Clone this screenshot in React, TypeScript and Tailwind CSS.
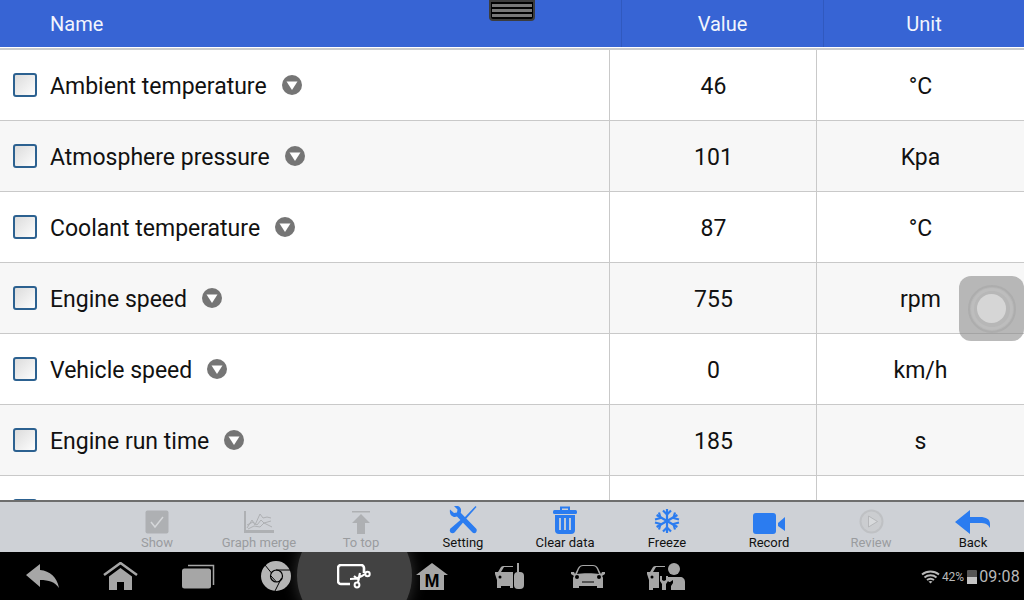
import type { ReactNode } from "react"

const rows = [
  { name: "Ambient temperature", value: "46", unit: "°C" },
  { name: "Atmosphere pressure", value: "101", unit: "Kpa" },
  { name: "Coolant temperature", value: "87", unit: "°C" },
  { name: "Engine speed", value: "755", unit: "rpm" },
  { name: "Vehicle speed", value: "0", unit: "km/h" },
  { name: "Engine run time", value: "185", unit: "s" },
  { name: "", value: "", unit: "" },
]

const BLUE = "#2b7cf0"
const OFF = "#aeb0b3"
const NAV = "#a6a6a6"

function ShowIcon() {
  return (
    <svg width="24" height="24" viewBox="0 0 24 24">
      <rect x="0.500" y="0.500" width="23" height="23" rx="2" fill={OFF} />
      <path d="M6 12l4 5 8-10" fill="none" stroke="#d5d7da" strokeWidth="1.500" />
    </svg>
  )
}

function GraphIcon() {
  return (
    <svg width="30" height="23" viewBox="0 0 30 23">
      <path d="M0 0h2v19h28v3H0z" fill={OFF} />
      <path d="M3 17l5-8 3 5 5-11 3 4 4-1 4 1M3 14l6-3 4 3 4-5 3 3 7-2M4 18l6-3 6 1 4-4 8 4" fill="none" stroke={OFF} strokeWidth="1" />
    </svg>
  )
}

function ToTopIcon() {
  return (
    <svg width="20" height="23" viewBox="0 0 20 23">
      <path d="M1 0h18v1.500H1z" fill={OFF} />
      <path d="M10 3l9 9h-5v11H6V12H1z" fill={OFF} />
    </svg>
  )
}

function SettingIcon() {
  return (
    <svg width="28" height="28" viewBox="0 0 28 28">
      {/* screwdriver */}
      <path d="M26.500 0l1 1-11 12.500-1.500-1.500z" fill={BLUE} />
      <path d="M12 13.500l2.500 2.500-9 10.500c-1 1-3 1-4 0s-1-3 0-4z" fill={BLUE} />
      {/* wrench */}
      <path d="M1 3.500l4 3.500 3-.5.500-3L5 0c4-1 7.500 1 7 5 0 .8 0 1.200-.3 1.700L27 22.500c1 1 1 2.500 0 4-1 1-2.500 1-3.500 0L8 10.500C4 12 0 9 1 3.500z" fill={BLUE} />
    </svg>
  )
}

function TrashIcon() {
  return (
    <svg width="24" height="28" viewBox="0 0 24 28">
      <path d="M8 4V1.500h8V4" fill="none" stroke={BLUE} strokeWidth="2" />
      <rect x="0" y="4" width="24" height="4" rx="1.500" fill={BLUE} />
      <path d="M2 9h20v15a4 4 0 0 1-4 4H6a4 4 0 0 1-4-4z" fill={BLUE} />
      <path d="M7 12v12M12 12v12M17 12v12" stroke="#ced1d6" strokeWidth="1.800" />
    </svg>
  )
}

function SnowIcon() {
  return (
    <svg width="26" height="26" viewBox="0 0 26 26" fill="none" stroke={BLUE} strokeWidth="2.200">
      <path d="M13 1v24M2.600 7l20.800 12M2.600 19L23.400 7" />
      <path d="M9 2.500l4 4 4-4M9 23.500l4-4 4 4M1 11.500l5.500-1.500-1.500-5.500M25 14.500l-5.500 1.500 1.500 5.500M1 14.500l5.500 1.500-1.500 5.500M25 11.500l-5.500-1.500 1.500-5.500" />
    </svg>
  )
}

function RecordIcon() {
  return (
    <svg width="33" height="21" viewBox="0 0 33 21">
      <rect x="0" y="0" width="23" height="21" rx="3" fill={BLUE} />
      <path d="M25 10l7-6v14l-7-5z" fill={BLUE} />
    </svg>
  )
}

function ReviewIcon() {
  return (
    <svg width="25" height="25" viewBox="0 0 25 25">
      <circle cx="12.500" cy="12.500" r="12" fill="#bfc1c4" />
      <circle cx="12.500" cy="12.500" r="10" fill="#cbcdd0" />
      <path d="M9.500 7l9 5.500-9 5.500z" fill="#d8dadc" stroke={OFF} strokeWidth=".8" />
    </svg>
  )
}

function BackIcon() {
  return (
    <svg width="36" height="24" viewBox="0 0 36 24">
      <path d="M0 12L15 0v7h10c6 0 10 2 10 7v4c-2-4-5-5-10-5H15v11z" fill={BLUE} />
    </svg>
  )
}

function ToolItem({ icon, label, off }: { icon: ReactNode; label: string; off?: boolean }) {
  return (
    <div className="flex w-[102px] shrink-0 flex-col items-center">
      <div className="flex h-[28px] items-end justify-center">{icon}</div>
      <span className={`mt-[1px] text-[13px] leading-[15px] ${off ? "text-[#9a9c9f]" : "text-[#111111]"}`}>{label}</span>
    </div>
  )
}

function NavSlot({ children }: { children: ReactNode }) {
  return <div className="flex w-[78px] shrink-0 items-center justify-center">{children}</div>
}

function App() {
  return (
    <div className="relative flex h-[600px] w-[1024px] flex-col overflow-hidden bg-white font-['Roboto',sans-serif]">
      {/* header */}
      <div className="flex h-[47px] shrink-0 items-center bg-[#3764d4] text-[20px] text-[#f2f5fd]">
        <div className="w-[621px] pl-[50px]">Name</div>
        <div className="flex h-full w-[202px] items-center justify-center border-l border-[#3059bf]">Value</div>
        <div className="flex h-full flex-1 items-center justify-center border-l border-[#3059bf]">Unit</div>
      </div>
      <div className="h-[3px] shrink-0 border-b-2 border-[#c9cbce] bg-white" />

      {/* table */}
      <div className="h-[452px] shrink-0 overflow-hidden border-b-2 border-[#6e6e6e]">
        {rows.map((r, i) => (
          <div
            key={i}
            className={`box-content flex h-[70px] border-b border-[#c9c9c9] ${i % 2 ? "bg-[#f7f7f7]" : "bg-white"}`}
          >
            <div className="flex w-[609px] shrink-0 items-center pl-[13px]">
              <div className="h-[24px] w-[24px] shrink-0 rounded-[3px] border-2 border-[#2c6190] bg-gradient-to-br from-[#dcdcdc] to-[#fdfdfd]" />
              {r.name && (
                <>
                  <span className="ml-[13px] pt-[5px] text-[23px] text-[#111111]">{r.name}</span>
                  <svg className="ml-[15px]" width="20" height="20" viewBox="0 0 20 20">
                    <circle cx="10" cy="10" r="10" fill="#757575" />
                    <path d="M4.500 6.500h11L10 15z" fill="#fff" />
                  </svg>
                </>
              )}
            </div>
            <div className="flex w-[207px] shrink-0 items-center justify-center border-l border-[#c9c9c9] pl-[1px] pt-[5px] text-[23px] text-[#111111]">
              {r.value}
            </div>
            <div className="flex flex-1 items-center justify-center border-l border-[#c9c9c9] pt-[5px] text-[23px] text-[#111111]">
              {r.unit}
            </div>
          </div>
        ))}
      </div>

      {/* toolbar */}
      <div className="flex h-[50px] shrink-0 items-end bg-[#ced1d6] pb-[2px] pl-[106px]">
        <ToolItem off label="Show" icon={<ShowIcon />} />
        <ToolItem off label="Graph merge" icon={<GraphIcon />} />
        <ToolItem off label="To top" icon={<ToTopIcon />} />
        <ToolItem label="Setting" icon={<SettingIcon />} />
        <ToolItem label="Clear data" icon={<TrashIcon />} />
        <ToolItem label="Freeze" icon={<SnowIcon />} />
        <ToolItem label="Record" icon={<RecordIcon />} />
        <ToolItem off label="Review" icon={<ReviewIcon />} />
        <ToolItem label="Back" icon={<BackIcon />} />
      </div>

      {/* android nav bar */}
      <div className="relative flex h-[48px] shrink-0 items-center overflow-hidden bg-black pl-[3px]">
        <div className="absolute left-[297px] top-[-34px] h-[115px] w-[115px] rounded-full bg-[#424242] shadow-[0_0_16px_#333333]" />
        <div className="relative flex items-center">
          <NavSlot>
            <svg width="33" height="24" viewBox="0 0 33 24">
              <path d="M0 11L14 0v6c10 1 17 7 19 18-4-6-10-8-19-8v7z" fill={NAV} />
            </svg>
          </NavSlot>
          <NavSlot>
            <svg width="35" height="28" viewBox="0 0 35 28">
              <path d="M1 13L17.500 1 34 13" fill="none" stroke={NAV} strokeWidth="2.500" />
              <path d="M17.500 6L29 14.500V28h-8v-8h-7v8H6V14.500z" fill={NAV} />
            </svg>
          </NavSlot>
          <NavSlot>
            <svg width="33" height="25" viewBox="0 0 33 25">
              <path d="M6 1.500h25.500V21" fill="none" stroke={NAV} strokeWidth="1.500" />
              <rect x="0" y="4.500" width="29" height="20" rx="2.500" fill={NAV} />
            </svg>
          </NavSlot>
          <NavSlot>
            <svg width="30" height="30" viewBox="0 0 30 30">
              <circle cx="15" cy="15" r="15" fill="#b5b5b5" />
              <circle cx="15.500" cy="15" r="6" fill="none" stroke="#000" strokeWidth="1.200" />
              <path d="M15 9h14M10.500 12L4 4M20.500 17L14 30M10 15l5.500 6" fill="none" stroke="#000" strokeWidth="1" />
            </svg>
          </NavSlot>
          <NavSlot>
            <svg width="34" height="25" viewBox="0 0 34 25" fill="none">
              <path d="M13 20H4a3 3 0 0 1-3-3V4a3 3 0 0 1 3-3h20a3 3 0 0 1 3 3v5" stroke="#fff" strokeWidth="2.600" />
              <path d="M17 12l5 4M13 15c6 0 10-1 15-5M23 9c-1 3-1 6-2 9" stroke="#fff" strokeWidth="2.200" />
              <circle cx="30.500" cy="10" r="2.200" stroke="#fff" strokeWidth="2" />
              <circle cx="20" cy="21" r="2.400" stroke="#fff" strokeWidth="2" />
            </svg>
          </NavSlot>
          <NavSlot>
            <svg width="32" height="27" viewBox="0 0 32 27">
              <path d="M16 0l16 12h-4v15H4V12H0z" fill={NAV} />
              <text x="16" y="24" textAnchor="middle" fontSize="18" fontWeight="700" fill="#000" fontFamily="Liberation Sans, sans-serif">
                M
              </text>
            </svg>
          </NavSlot>
          <NavSlot>
            <svg width="31" height="26" viewBox="0 0 31 26">
              <path d="M0 9h3l3-5c1-1 1.500-1 3-1h9v1H9L6 9h12v16h-3v-2H6v2H2v-8L0 11z" fill={NAV} />
              <circle cx="5" cy="14" r="1.500" fill="#000" />
              <rect x="19" y="9" width="10" height="17" rx="4" fill={NAV} />
              <path d="M23 0v9" stroke={NAV} strokeWidth="2" />
            </svg>
          </NavSlot>
          <NavSlot>
            <svg width="34" height="23" viewBox="0 0 34 23">
              <path d="M0 7h3l1 2 3-6c1-2 3-3 5-3h10c2 0 4 1 5 3l3 6 1-2h3v2l-3 2c1 1 1 2 1 3v9h-6v-2H8v2H2v-9c0-1 0-2 1-3L0 9zM6 9c4-1 18-1 22 0l-2-5c-1-2-2-3-4-3H12c-2 0-3 1-4 3z" fill={NAV} fillRule="evenodd" />
              <circle cx="6" cy="12" r="2" fill="#000" />
              <circle cx="28" cy="12" r="2" fill="#000" />
              <path d="M11 17h12" stroke="#000" strokeWidth="1" />
            </svg>
          </NavSlot>
          <NavSlot>
            <svg width="38" height="27" viewBox="0 0 38 27">
              <circle cx="27" cy="6" r="6" fill={NAV} />
              <path d="M20 14h13c3 0 5 2 5 5v8H24v-4l2-3v-3l-3 2h-1l-2-2z" fill={NAV} />
              <path d="M15 27v-6l-2-3v-5h2v4l2 1 2-1v-4h2v5l-2 3v6z" fill={NAV} />
              <path d="M0 9h3l3-5c1-1 1.500-1 3-1h9v1H9L6 9h6v16H6v2H2v-10L0 11z" fill={NAV} />
              <circle cx="5" cy="14" r="1.500" fill="#000" />
            </svg>
          </NavSlot>
        </div>
        {/* status */}
        <div className="absolute right-[4px] top-[17px] flex items-center text-[#b9b9b9]">
          <svg width="19" height="14" viewBox="0 0 19 14" fill="none" stroke="#b9b9b9" strokeWidth="2">
            <path d="M1 4.500c5-4 12-4 17 0M3.500 7.500c3.500-3 8.500-3 12 0M6 10c2-1.500 5-1.500 7 0" />
            <path d="M7.500 11.500c1-.7 3-.7 4 0L9.500 13.500z" fill="#b9b9b9" stroke="none" />
          </svg>
          <span className="ml-[2px] text-[12px] leading-none">42%</span>
          <div className="ml-[3px] flex h-[14px] w-[10px] flex-col rounded-[1px] bg-[#555555]">
            <div className="mt-auto h-[7px] bg-[#c4c4c4]" />
          </div>
          <span className="ml-[2px] text-[16px] leading-none tracking-[0.2px]">09:08</span>
        </div>
      </div>

      {/* drag handle over the header */}
      <div className="absolute left-[489px] top-0 flex h-[21px] w-[46px] flex-col justify-center gap-[2px] rounded-b-[4px] border-2 border-[#3c3c3c] bg-black px-[1px]">
        <div className="h-[3px] bg-[#777777]" />
        <div className="h-[3px] bg-[#777777]" />
        <div className="h-[3px] bg-[#777777]" />
      </div>

      {/* floating assist button */}
      <div className="absolute left-[959px] top-[276px] flex h-[65px] w-[65px] items-center justify-center rounded-[12px] bg-[#8c8c8c]/60">
        <div className="flex h-[48px] w-[48px] items-center justify-center rounded-full border-[2px] border-[#a8a8a8]/70">
          <div className="flex h-[42px] w-[42px] items-center justify-center rounded-full border-[3px] border-[#bdbdbd]">
            <div className="h-[29px] w-[29px] rounded-full bg-[#d6d6d6]" />
          </div>
        </div>
      </div>
    </div>
  )
}

export default App
